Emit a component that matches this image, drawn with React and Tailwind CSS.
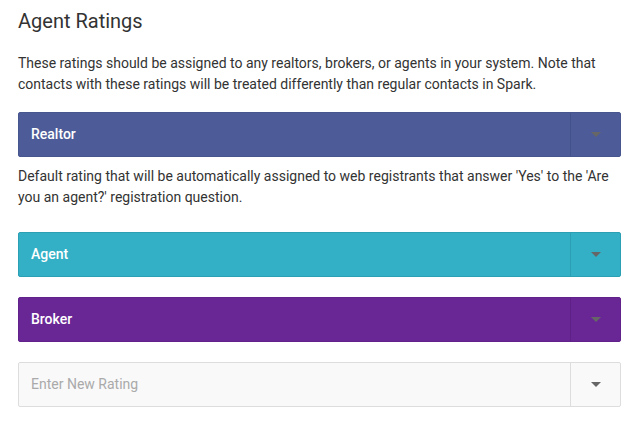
const ratings = [
  { name: 'Realtor', bg: 'bg-[#4d5c98]', border: 'border-[#485690]', divider: 'border-[#43518a]' },
  { name: 'Agent', bg: 'bg-[#34b0c6]', border: 'border-[#2b9fb3]', divider: 'border-[#2b9fb3]' },
  { name: 'Broker', bg: 'bg-[#692796]', border: 'border-[#62228c]', divider: 'border-[#5e2087]' },
];

function Caret() {
  return (
    <svg width="10" height="6" viewBox="0 0 10 6" className="text-[#666]">
      <path d="M0 0h10L5 5z" fill="currentColor" />
    </svg>
  );
}

function RatingSelect({ rating }) {
  return (
    <div className={`flex h-[45px] items-stretch rounded-[2px] border ${rating.bg} ${rating.border}`}>
      <div className="flex flex-1 items-center px-3 text-[14px] font-medium text-white">{rating.name}</div>
      <div className={`flex w-[50px] items-center justify-center border-l ${rating.divider}`}>
        <Caret />
      </div>
    </div>
  );
}

export default function App() {
  return (
    <div className="min-h-screen bg-white px-[18px] pt-[8px] text-[#333]" style={{ fontFamily: 'Roboto, sans-serif' }}>
      <h1 className="text-[20px] leading-[26px] font-normal">Agent Ratings</h1>
      <p className="mt-[19px] text-[14px] leading-[21px]">
        These ratings should be assigned to any realtors, brokers, or agents in your system. Note that contacts with these ratings will be treated differently than regular contacts in Spark.
      </p>
      <div className="mt-[17px]">
        <RatingSelect rating={ratings[0]} />
      </div>
      <p className="mt-[9px] text-[14px] leading-[21px]">
        Default rating that will be automatically assigned to web registrants that answer 'Yes' to the 'Are you an agent?' registration question.
      </p>
      <div className="mt-[24px] flex flex-col gap-[20px]">
        <RatingSelect rating={ratings[1]} />
        <RatingSelect rating={ratings[2]} />
        <div className="flex h-[45px] items-stretch rounded-[2px] border border-[#ddd] bg-[#f9f9f9]">
          <input
            placeholder="Enter New Rating"
            className="flex-1 bg-transparent px-3 text-[14px] text-[#333] outline-none placeholder:text-[#aaa]"
          />
          <div className="flex w-[50px] items-center justify-center border-l border-[#ddd]">
            <Caret />
          </div>
        </div>
      </div>
    </div>
  );
}
